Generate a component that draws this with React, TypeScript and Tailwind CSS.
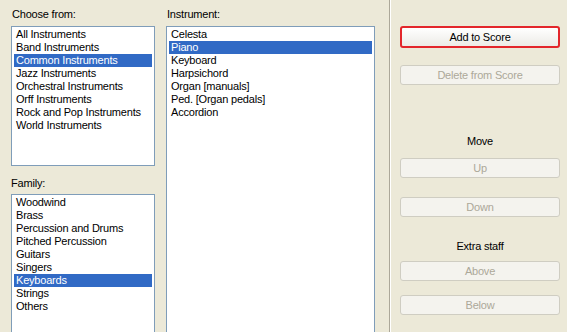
const chooseFrom = [
  'All Instruments',
  'Band Instruments',
  'Common Instruments',
  'Jazz Instruments',
  'Orchestral Instruments',
  'Orff Instruments',
  'Rock and Pop Instruments',
  'World Instruments',
];

const families = [
  'Woodwind',
  'Brass',
  'Percussion and Drums',
  'Pitched Percussion',
  'Guitars',
  'Singers',
  'Keyboards',
  'Strings',
  'Others',
];

const instruments = [
  'Celesta',
  'Piano',
  'Keyboard',
  'Harpsichord',
  'Organ [manuals]',
  'Ped. [Organ pedals]',
  'Accordion',
];

function ListBox({ items, selected, className }: { items: string[]; selected: string; className: string }) {
  return (
    <div className={`shrink-0 border border-[#7f9db9] bg-white px-[2px] py-[1px] ${className}`}>
      {items.map((item) => (
        <div
          key={item}
          className={`h-[13px] pl-[2px] leading-[13px] whitespace-nowrap ${
            item === selected ? 'bg-[#316ac5] text-white' : 'text-black'
          }`}
        >
          {item}
        </div>
      ))}
    </div>
  );
}

function DisabledButton({ label, className }: { label: string; className: string }) {
  return (
    <div
      className={`flex h-[20px] shrink-0 items-center justify-center rounded-[3px] border border-[#cfcdc2] bg-[#f4f3ee] text-[#aca899] ${className}`}
    >
      {label}
    </div>
  );
}

export default function App() {
  return (
    <div
      className="flex h-[332px] w-[567px] overflow-hidden bg-[#ece9d8] pl-[11px] pt-[8px] text-[11px] tracking-[-0.2px] text-black"
      style={{ fontFamily: '"Liberation Sans", Arial, sans-serif' }}
    >
      <div className="flex w-[144px] shrink-0 flex-col">
        <div className="mb-[5px] h-[13px] shrink-0 pl-[1px] leading-[13px]">Choose from:</div>
        <ListBox items={chooseFrom} selected="Common Instruments" className="h-[140px]" />
        <div className="mb-[4px] mt-[11px] h-[13px] shrink-0 leading-[13px]">Family:</div>
        <ListBox items={families} selected="Keyboards" className="h-[160px]" />
      </div>

      <div className="ml-[11px] flex w-[209px] shrink-0 flex-col">
        <div className="mb-[5px] h-[13px] shrink-0 pl-[1px] leading-[13px]">Instrument:</div>
        <ListBox items={instruments} selected="Piano" className="h-[320px]" />
      </div>

      <div className="-mt-[8px] ml-[14px] flex h-[340px] shrink-0">
        <div className="w-px bg-[#aca899]" />
        <div className="w-px bg-white" />
      </div>

      <div className="ml-[9px] flex w-[160px] shrink-0 flex-col pt-[18px]">
        <div className="flex h-[22px] shrink-0 items-center justify-center rounded-[3px] border-2 border-[#e3262b] bg-gradient-to-b from-white to-[#ecebe6]">
          Add to Score
        </div>
        <DisabledButton label="Delete from Score" className="mt-[17px]" />
        <div className="mt-[50px] h-[13px] shrink-0 text-center leading-[13px]">Move</div>
        <DisabledButton label="Up" className="mt-[10px]" />
        <DisabledButton label="Down" className="mt-[19px]" />
        <div className="mt-[23px] h-[13px] shrink-0 text-center leading-[13px]">Extra staff</div>
        <DisabledButton label="Above" className="mt-[8px]" />
        <DisabledButton label="Below" className="mt-[14px]" />
      </div>
    </div>
  );
}
